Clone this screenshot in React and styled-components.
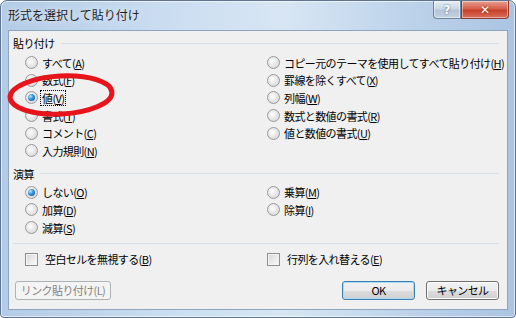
import React from "react";
import styled, { createGlobalStyle } from "styled-components";

const Global = createGlobalStyle`
  html, body { margin: 0; padding: 0; background: #fff; }
  body { font-family: "Noto Sans CJK JP", "Noto Sans", sans-serif; font-size: 11px; letter-spacing: -0.6px; color: #000; }
`;

const Window = styled.div`
  width: 516px;
  height: 318px;
  box-sizing: border-box;
  border: 1px solid #5f7591;
  border-radius: 7px 7px 4px 4px;
  background: linear-gradient(90deg, #b3cbe6 0%, #c9dcf0 30%, #d8e6f4 55%, #bcd2ea 80%, #aac4e2 100%);
  display: flex;
  flex-direction: column;
  padding: 0 7px 7px 7px;
  box-shadow: inset 0 0 0 1px rgba(255, 255, 255, 0.6);
`;

const TitleBar = styled.div`
  height: 29px;
  display: flex;
  align-items: flex-start;
  justify-content: space-between;
`;

const Title = styled.div`
  padding-top: 6px;
  font-size: 12px;
  letter-spacing: 0;
  line-height: 16px;
  color: #1e1e1e;
  text-shadow: 0 0 6px rgba(255, 255, 255, 0.9);
`;

const Caption = styled.div`
  display: flex;
  margin-right: -1px;
`;

const CapButton = styled.div`
  height: 18px;
  width: ${p => p.$w}px;
  box-sizing: border-box;
  border: 1px solid ${p => (p.$close ? "#8b3a34" : "#72859c")};
  border-top: none;
  border-radius: ${p => (p.$close ? "0 0 4px 0" : "0 0 0 4px")};
  background: ${p =>
    p.$close
      ? "linear-gradient(#e8a092 0%, #d7604c 45%, #c7412c 55%, #d9705a 100%)"
      : "linear-gradient(#e6eef7 0%, #cbd8e6 45%, #b4c4d7 55%, #c5d3e3 100%)"};
  display: flex;
  align-items: center;
  justify-content: center;
  color: #fff;
  font-family: "DejaVu Sans", sans-serif;
  font-weight: bold;
  font-size: 12px;
  letter-spacing: 0;
  text-shadow: 0 0 2px ${p => (p.$close ? "#6e1a10" : "#3e5068")};
  box-shadow: inset 0 0 0 1px rgba(255, 255, 255, 0.45);
`;

const Client = styled.div`
  flex: 1;
  border: 1px solid #8ea5c0;
  background: #f0f0f0;
  padding: 4px 8px 0 4px;
  display: flex;
  flex-direction: column;
`;

const GroupHead = styled.div`
  display: flex;
  align-items: center;
  height: 16px;
  gap: 6px;
  &::after {
    content: "";
    flex: 1;
    height: 1px;
    background: #d5dfe5;
  }
`;

const Grid = styled.div`
  display: grid;
  grid-template-columns: 242px 1fr;
  grid-auto-rows: 17.6px;
  padding-left: 12px;
  margin-top: ${p => p.$mt}px;
`;

const Row = styled.div`
  display: flex;
  align-items: center;
  gap: 2px;
  grid-column: ${p => p.$col};
  grid-row: ${p => p.$row};
  white-space: nowrap;
`;

const Radio = styled.span`
  width: 13px;
  height: 13px;
  box-sizing: border-box;
  border-radius: 50%;
  border: 1px solid #9a9a9a;
  background: radial-gradient(circle at 40% 40%, #ffffff 0%, #e8e8e8 45%, #cfcfcf 100%);
  display: inline-flex;
  align-items: center;
  justify-content: center;
  flex: none;
  &::after {
    content: "";
    display: ${p => (p.$on ? "block" : "none")};
    width: 7px;
    height: 7px;
    border-radius: 50%;
    background: radial-gradient(circle at 35% 35%, #bfe6ff 0%, #2b8fd6 45%, #0d4f93 100%);
  }
`;

const Check = styled.span`
  width: 13px;
  height: 13px;
  box-sizing: border-box;
  border: 1px solid #8f8f8f;
  background: linear-gradient(135deg, #d6d6d6 0%, #ededed 60%, #fafafa 100%);
  box-shadow: inset 0 0 0 1px #f4f4f4;
  flex: none;
  margin-right: 3px;
`;

const Label = styled.span`
  line-height: 14px;
  padding: 0 1px;
  border: 1px ${p => (p.$focus ? "dotted #000" : "solid transparent")};
`;

const Sep = styled.div`
  height: 1px;
  background: #d5dfe5;
  margin: ${p => p.$m};
`;

const Footer = styled.div`
  display: flex;
  align-items: center;
  margin-top: 13px;
  padding-left: 2px;
`;

const Button = styled.div`
  height: 19px;
  width: ${p => p.$w}px;
  box-sizing: border-box;
  border-radius: 3px;
  white-space: nowrap;
  border: 1px solid ${p => (p.$disabled ? "#adb2b5" : p.$default ? "#3c7fb1" : "#707070")};
  background: ${p =>
    p.$disabled
      ? "#f4f4f4"
      : "linear-gradient(#f2f2f2 0%, #ebebeb 50%, #dddddd 51%, #cfcfcf 100%)"};
  box-shadow: inset 0 0 0 1px ${p => (p.$disabled ? "#f4f4f4" : p.$default ? "#a9dcf5" : "#fcfcfc")};
  color: ${p => (p.$disabled ? "#838383" : "#000")};
  display: flex;
  align-items: center;
  justify-content: center;
  margin-left: ${p => p.$ml || 0}px;
`;

const Spacer = styled.div`
  flex: 1;
`;

const Mark = styled.svg`
  position: absolute;
  left: 6px;
  top: 70px;
  pointer-events: none;
`;

const Stage = styled.div`
  position: relative;
  width: 516px;
  height: 318px;
`;

const Key = ({ children }) => <u>{children}</u>;

const item = (text, k) => (
  <>
    {text}(<Key>{k}</Key>)
  </>
);

export default function App() {
  return (
    <Stage>
      <Global />
      <Window>
        <TitleBar>
          <Title>形式を選択して貼り付け</Title>
          <Caption>
            <CapButton $w={28}>?</CapButton>
            <CapButton $w={48} $close>✕</CapButton>
          </Caption>
        </TitleBar>
        <Client>
          <GroupHead>貼り付け</GroupHead>
          <Grid $mt={3}>
            <Row $col={1} $row={1}><Radio /><Label>{item("すべて", "A")}</Label></Row>
            <Row $col={1} $row={2}><Radio /><Label>{item("数式", "F")}</Label></Row>
            <Row $col={1} $row={3}><Radio $on /><Label $focus>{item("値", "V")}</Label></Row>
            <Row $col={1} $row={4}><Radio /><Label>{item("書式", "T")}</Label></Row>
            <Row $col={1} $row={5}><Radio /><Label>{item("コメント", "C")}</Label></Row>
            <Row $col={1} $row={6}><Radio /><Label>{item("入力規則", "N")}</Label></Row>
            <Row $col={2} $row={1}><Radio /><Label>{item("コピー元のテーマを使用してすべて貼り付け", "H")}</Label></Row>
            <Row $col={2} $row={2}><Radio /><Label>{item("罫線を除くすべて", "X")}</Label></Row>
            <Row $col={2} $row={3}><Radio /><Label>{item("列幅", "W")}</Label></Row>
            <Row $col={2} $row={4}><Radio /><Label>{item("数式と数値の書式", "R")}</Label></Row>
            <Row $col={2} $row={5}><Radio /><Label>{item("値と数値の書式", "U")}</Label></Row>
          </Grid>
          <div style={{ height: 6 }} />
          <GroupHead>演算</GroupHead>
          <Grid $mt={2}>
            <Row $col={1} $row={1}><Radio $on /><Label>{item("しない", "O")}</Label></Row>
            <Row $col={1} $row={2}><Radio /><Label>{item("加算", "D")}</Label></Row>
            <Row $col={1} $row={3}><Radio /><Label>{item("減算", "S")}</Label></Row>
            <Row $col={2} $row={1}><Radio /><Label>{item("乗算", "M")}</Label></Row>
            <Row $col={2} $row={2}><Radio /><Label>{item("除算", "I")}</Label></Row>
          </Grid>
          <Sep $m="7px 0 6px 0" />
          <Grid $mt={0}>
            <Row $col={1} $row={1}><Check /><Label>{item("空白セルを無視する", "B")}</Label></Row>
            <Row $col={2} $row={1}><Check /><Label>{item("行列を入れ替える", "E")}</Label></Row>
          </Grid>
          <Footer>
            <Button $w={96} $disabled>リンク貼り付け(L)</Button>
            <Spacer />
            <Button $w={73} $default>OK</Button>
            <Button $w={73} $ml={11}>キャンセル</Button>
          </Footer>
        </Client>
      </Window>
      <Mark width="120" height="56" viewBox="0 0 120 56">
        <ellipse cx="55" cy="25" rx="51" ry="19" fill="none" stroke="#e8141b" strokeWidth="5" transform="rotate(-3 55 25)" />
      </Mark>
    </Stage>
  );
}
